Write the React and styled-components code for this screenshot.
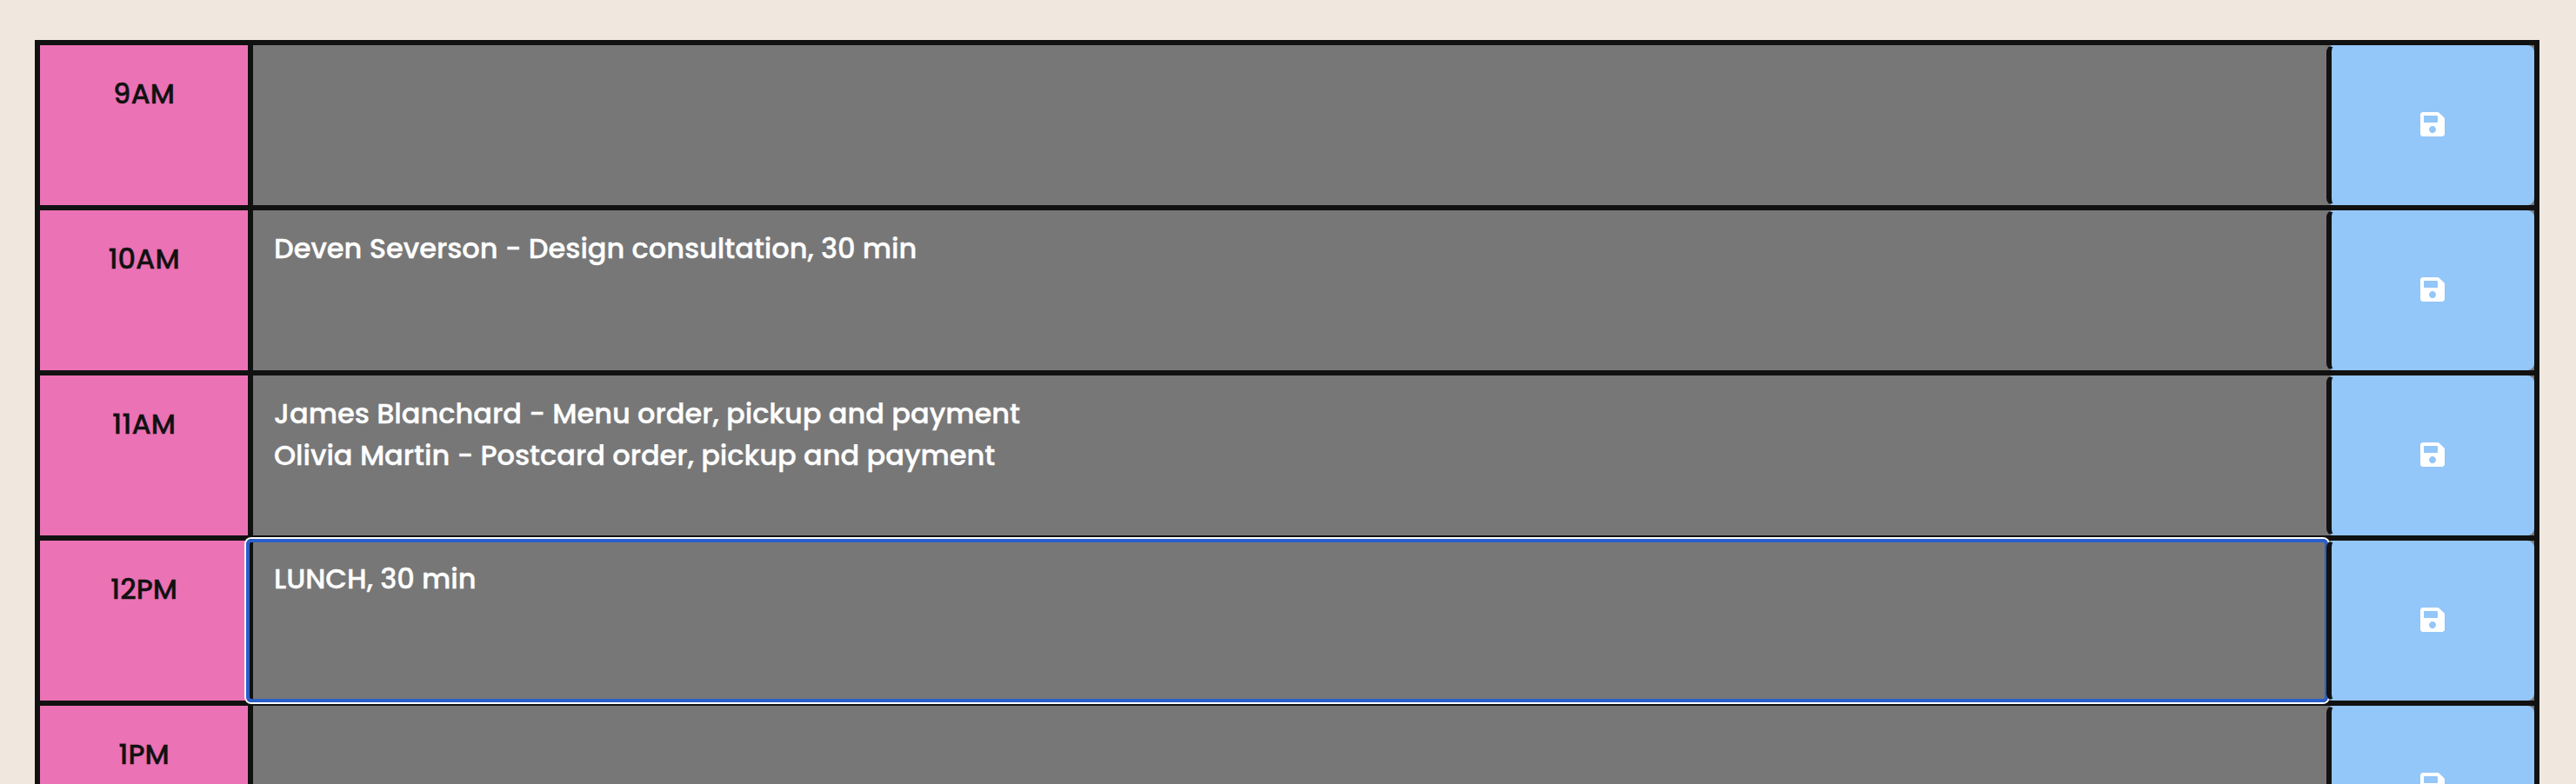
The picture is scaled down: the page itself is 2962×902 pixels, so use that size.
import React from 'react';
import styled, { createGlobalStyle, css } from 'styled-components';
import { FaSave } from 'react-icons/fa';

const GlobalStyle = createGlobalStyle`
  *, *::before, *::after { box-sizing: border-box; }
  body {
    margin: 0;
    background: #f0e7de;
    font-family: Poppins, Inter, "Liberation Sans", sans-serif;
    font-size: 32px;
    font-weight: 500;
    line-height: 48px;
    -webkit-text-stroke: 0.4px currentColor;
  }
`;

const Page = styled.div`
  height: 902px;
  padding: 46px 42px 0 40px;
  overflow: hidden;
`;

const Planner = styled.main`
  border: 6px solid #111;
  background: #777;
`;

const TimeBlock = styled.section`
  display: grid;
  grid-template-columns: 239px 1fr 239px;
  height: 190px;
  border-bottom: 6px solid #111;
`;

const Hour = styled.div`
  padding: 32px 6px 0 0;
  margin-right: -6px;
  background: #eb72b5;
  color: #111;
  text-align: center;
`;

const Entry = styled.div`
  position: relative;
  padding: 20px 24px;
  border-left: 6px solid #111;
  color: #fff;

  ${({ $focused }) => $focused && css`
    &::after {
      content: '';
      position: absolute;
      z-index: 1;
      inset: -2px -2px -2px -8px;
      border: 4px solid #2a5fca;
      border-radius: 6px;
      box-shadow: 0 0 0 2px #fff;
    }
  `}
`;

const Line = styled.span`
  display: block;
  width: max-content;
  white-space: pre;
`;

const SaveButton = styled.button`
  position: relative;
  z-index: 2;
  display: flex;
  align-items: center;
  justify-content: center;
  padding: 0 0 2px;
  border: 2px solid transparent;
  border-left: 6px solid #111;
  border-radius: 8px;
  background: #93c6f9;
  color: #fff;
`;

const SaveIcon = styled(FaSave)`
  width: 28px;
  height: 32px;
`;

const blocks = [
  { hour: '9AM', lines: [] },
  { hour: '10AM', lines: ['Deven Severson - Design consultation, 30 min'] },
  {
    hour: '11AM',
    lines: [
      'James Blanchard - Menu order, pickup and payment',
      'Olivia Martin - Postcard order, pickup and payment',
    ],
  },
  { hour: '12PM', lines: ['LUNCH, 30 min'], focused: true },
  { hour: '1PM', lines: [] },
];

export default function App() {
  return (
    <>
      <GlobalStyle />
      <Page>
        <Planner>
          {blocks.map(({ hour, lines, focused }) => (
            <TimeBlock key={hour}>
              <Hour>{hour}</Hour>
              <Entry $focused={focused}>
                {lines.map((text) => <Line key={text}>{text}</Line>)}
              </Entry>
              <SaveButton aria-label={`Save ${hour}`}><SaveIcon /></SaveButton>
            </TimeBlock>
          ))}
        </Planner>
      </Page>
    </>
  );
}
